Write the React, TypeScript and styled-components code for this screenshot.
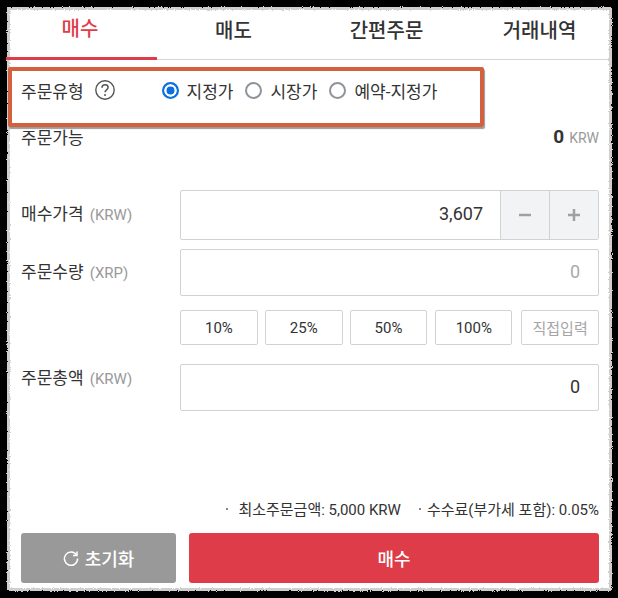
import React from "react";
import styled, { createGlobalStyle } from "styled-components";

const Global = createGlobalStyle`
  html, body { margin: 0; padding: 0; background: #000; }
  body { font-family: Roboto, "Noto Sans CJK KR", sans-serif; color: #333; }
  * { box-sizing: border-box; }
`;
const Page = styled.div`
  width: 618px; height: 598px; background: #000; padding: 8px 7px 8px 8px; overflow: hidden;
`;
const Panel = styled.div`
  position: relative; width: 603px; height: 582px; display: flex; flex-direction: column;
`;
const RoughEdge = styled.div`
  position: absolute; inset: -1px; background: #fff; filter: url(#rough);
  box-shadow: inset 0 0 0 3px #cfcfcf;
`;
const Tabs = styled.div`
  position: relative; display: grid; grid-template-columns: 149px 153px 153px 1fr; height: 52px;
  border-bottom: 1px solid #d5d5d5;
`;
const Tab = styled.div<{ $active?: boolean; $shift?: number }>`
  display: flex; align-items: center; justify-content: center; height: 52px; padding-bottom: 10px;
  padding-left: ${p => Math.max(p.$shift ?? 0, 0)}px; padding-right: ${p => Math.max(-(p.$shift ?? 0), 0)}px;
  margin-left: ${p => (p.$active ? -2 : 0)}px;
  font-size: 20px; font-weight: 500; color: ${p => (p.$active ? "#e03c48" : "#333")};
  border-bottom: ${p => (p.$active ? "3px solid #dd3c48" : "none")};
`;
const Body = styled.div`
  position: relative; flex: 1; display: flex; flex-direction: column; padding: 0 12px 0 13px;
`;
const TypeRow = styled.div`
  display: flex; align-items: center; height: 60px; font-size: 17px;
`;
const Help = styled.svg`
  margin-left: 11px; margin-right: 47px; width: 20px; height: 20px;
`;
const RadioGroup = styled.div`
  display: flex; align-items: center; gap: 12px;
`;
const RadioItem = styled.div`
  display: flex; align-items: center; gap: 8px;
`;
const RadioMark = styled.span<{ $on?: boolean }>`
  width: 17px; height: 17px; border-radius: 50%; background: ${p => (p.$on ? "#0b6fe0" : "#fff")}; display: block;
  border: 2px solid ${p => (p.$on ? "#0b6fe0" : "#8f939b")};
  box-shadow: ${p => (p.$on ? "inset 0 0 0 2.5px #fff" : "none")};
`;
const Highlight = styled.div`
  position: absolute; left: 0; top: 7px; width: 476px; height: 60px;
  border: 4px solid #d3603f; box-shadow: 1px 2px 1px #9a9a9a; border-radius: 2px;
  pointer-events: none;
`;
const AvailRow = styled.div`
  display: flex; align-items: center; justify-content: space-between; height: 24px; margin-top: 4px;
  font-size: 17px; margin-bottom: 42px;
`;
const AvailValue = styled.div`
  display: flex; align-items: baseline; gap: 5px;
`;
const Strong = styled.b`
  font-size: 19px; font-weight: 700;
`;
const Unit = styled.span`
  font-size: 14px; color: #999;
`;
const FieldRow = styled.div<{ $h: number; $mb: number }>`
  display: grid; grid-template-columns: 159px 1fr; height: ${p => p.$h}px; margin-bottom: ${p => p.$mb}px;
`;
const Label = styled.div<{ $pt: number }>`
  font-size: 17px; padding-top: ${p => p.$pt}px; line-height: 22px;
`;
const LabelUnit = styled.span`
  font-size: 15px; color: #999; margin-left: 2px;
`;
const Field = styled.div`
  display: flex; border: 1px solid #d2d2d2; border-radius: 2px; background: #fff;
`;
const Value = styled.div<{ $muted?: boolean; $pr: number }>`
  flex: 1; display: flex; align-items: center; justify-content: flex-end;
  padding-right: ${p => p.$pr}px; padding-bottom: 3px; font-size: 18px;
  color: ${p => (p.$muted ? "#aaa" : "#333")};
`;
const Stepper = styled.div`
  width: 49px; display: flex; align-items: center; justify-content: center;
  background: #f2f3f5; border-left: 1px solid #d2d2d2; color: #999;
`;
const Percents = styled.div`
  display: flex; margin-left: 159px; margin-bottom: 19px; height: 35px;
`;
const Pct = styled.div<{ $muted?: boolean; $w?: number; $ml?: number }>`
  display: flex; align-items: center; justify-content: center; border: 1px solid #d2d2d2;
  width: ${p => p.$w ?? 78}px; margin-left: ${p => p.$ml ?? 0}px;
  border-radius: 2px; font-size: 15px; color: ${p => (p.$muted ? "#a5a5a5" : "#333")};
`;
const Notes = styled.div`
  display: flex; justify-content: flex-end; align-items: center; gap: 18px; margin-top: auto;
  font-size: 15px; height: 20px; margin-bottom: 15px; color: #333;
`;
const Note = styled.span`
  display: flex; align-items: center;
`;
const Dot = styled.i<{ $w: number }>`
  display: block; flex: none; width: ${p => p.$w}px; height: 2px; margin-top: 2px;
  background: linear-gradient(#888, #888) left / 2px 2px no-repeat;
`;
const Actions = styled.div`
  display: grid; grid-template-columns: 155px 1fr; gap: 13px; height: 50px; margin-bottom: 7px;
`;
const ActionButton = styled.div<{ $tone: string }>`
  display: flex; align-items: center; justify-content: center; gap: 6px; border-radius: 3px;
  background: ${p => p.$tone}; color: #fff; font-size: 18px; font-weight: 500;
`;

const Radio = ({ on, children }: { on?: boolean; children: React.ReactNode }) => (
  <RadioItem>
    <RadioMark $on={on} />
    <span>{children}</span>
  </RadioItem>
);

export default function App() {
  return (
    <>
      <Global />
      <Page>
        <svg width="0" height="0" style={{ position: "absolute" }}>
          <filter id="rough" x="-2%" y="-2%" width="104%" height="104%">
            <feTurbulence type="fractalNoise" baseFrequency="0.9" numOctaves="2" seed="4" />
            <feDisplacementMap in="SourceGraphic" scale="3" />
          </filter>
        </svg>
        <Panel>
          <RoughEdge />
          <Tabs>
            <Tab $active $shift={-3}>매수</Tab>
            <Tab>매도</Tab>
            <Tab>간편주문</Tab>
            <Tab $shift={5}>거래내역</Tab>
          </Tabs>
          <Body>
            <TypeRow>
              주문유형
              <Help viewBox="0 0 20 20">
                <circle cx="10" cy="10" r="9.2" fill="none" stroke="#555" strokeWidth="1.4" />
                <path d="M7 7.8c0-1.8 1.3-3 3.1-3s3 1.1 3 2.7c0 2.4-3.1 2.4-3.1 4.8" fill="none" stroke="#555" strokeWidth="1.5" />
                <circle cx="10" cy="15" r="1" fill="#555" />
              </Help>
              <RadioGroup>
                <Radio on>지정가</Radio>
                <Radio>시장가</Radio>
                <Radio>예약-지정가</Radio>
              </RadioGroup>
            </TypeRow>
            <Highlight />
            <AvailRow>
              주문가능
              <AvailValue>
                <Strong>0</Strong>
                <Unit>KRW</Unit>
              </AvailValue>
            </AvailRow>
            <FieldRow $h={50} $mb={9}>
              <Label $pt={13}>
                매수가격 <LabelUnit>(KRW)</LabelUnit>
              </Label>
              <Field>
                <Value $pr={17}>3,607</Value>
                <Stepper>
                  <svg width="14" height="14" viewBox="0 0 14 14"><path d="M1 7h12" stroke="#a0a0a0" strokeWidth="2.5" /></svg>
                </Stepper>
                <Stepper>
                  <svg width="14" height="14" viewBox="0 0 14 14"><path d="M1 7h12M7 1v12" stroke="#a0a0a0" strokeWidth="2.5" /></svg>
                </Stepper>
              </Field>
            </FieldRow>
            <FieldRow $h={47} $mb={14}>
              <Label $pt={12}>
                주문수량 <LabelUnit>(XRP)</LabelUnit>
              </Label>
              <Field>
                <Value $muted $pr={18}>0</Value>
              </Field>
            </FieldRow>
            <Percents>
              <Pct>10%</Pct>
              <Pct $ml={7}>25%</Pct>
              <Pct $ml={7}>50%</Pct>
              <Pct $ml={8} $w={77}>100%</Pct>
              <Pct $ml={9} $w={78} $muted>직접입력</Pct>
            </Percents>
            <FieldRow $h={47} $mb={0}>
              <Label $pt={3}>
                주문총액 <LabelUnit>(KRW)</LabelUnit>
              </Label>
              <Field>
                <Value $pr={18}>0</Value>
              </Field>
            </FieldRow>
            <Notes>
              <Note><Dot $w={12} />최소주문금액: 5,000 KRW</Note>
              <Note><Dot $w={8} />수수료(부가세 포함): 0.05%</Note>
            </Notes>
            <Actions>
              <ActionButton $tone="#999999">
                <svg width="16" height="16" viewBox="0 0 16 16" fill="none" stroke="#fff" strokeWidth="1.5">
                  <path d="M13.6 5.2A6.6 6.6 0 1 0 14.6 8.6" />
                  <path d="M14 1.5v4h-4" />
                </svg>
                초기화
              </ActionButton>
              <ActionButton $tone="#dd3c48">매수</ActionButton>
            </Actions>
          </Body>
        </Panel>
      </Page>
    </>
  );
}
